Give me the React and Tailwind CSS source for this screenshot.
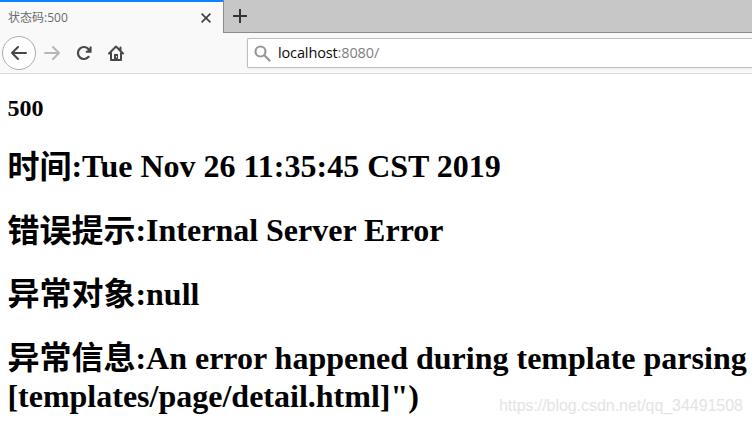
const serif = "font-['Liberation_Serif','Noto_Sans_CJK_SC',serif]";

function Label({ children }) {
  return <span className="relative top-px">{children}</span>;
}

function Tab() {
  return (
    <div className="flex h-[33px] w-[223px] shrink-0 items-center justify-between border-t-2 border-[#0a84ff] bg-[#f9f9fa] pl-2 pr-3">
      <span className="text-[12px] leading-4 text-[#6a6a6c] font-['Open_Sans','Noto_Sans_CJK_SC',sans-serif]">
        <span>状态码</span>
        <span>:500</span>
      </span>
      <svg width="10" height="10" viewBox="0 0 10 10" fill="none" stroke="#3f3f41" strokeWidth="1.6">
        <path d="M.6.6l8.8 8.8M9.4.6L.6 9.4" />
      </svg>
    </div>
  );
}

function TabStrip() {
  return (
    <div className="flex h-[33px] bg-[#f9f9fa]">
      <Tab />
      <div className="flex flex-1 border-b border-l border-[#8b8b8b] bg-[#c7c7c7] pl-[9px] pt-[9px]">
        <svg width="14" height="14" viewBox="0 0 14 14" fill="none" stroke="#333335" strokeWidth="2">
          <path d="M7 0v14M0 7h14" />
        </svg>
      </div>
    </div>
  );
}

function Toolbar() {
  return (
    <div className="flex h-[41px] items-center border-b border-[#dcdcdd] bg-[#f9f9fa] pl-[2px]">
      <div className="flex size-[34px] shrink-0 items-center justify-center rounded-full border border-[#adadae] bg-white">
        <svg width="16" height="14" viewBox="0 0 16 14" fill="none" stroke="#48484a" strokeWidth="2" strokeLinecap="round" strokeLinejoin="round">
          <path d="M7 1L1 7l6 6M1 7h14" />
        </svg>
      </div>
      <svg className="ml-2 shrink-0" width="16" height="14" viewBox="0 0 16 14" fill="none" stroke="#b7b7b8" strokeWidth="2" strokeLinecap="round" strokeLinejoin="round">
        <path d="M9 1l6 6-6 6M15 7H1" />
      </svg>
      <svg className="ml-4 shrink-0" width="16" height="16" viewBox="0 0 16 16" fill="none" stroke="#48484a" strokeWidth="2.2" strokeLinecap="round">
        <path d="M12.6 4.200A6 6 0 1 0 12.600 11.800" />
        <path d="M14.600 1.500v5.200H9.800" strokeWidth="2" strokeLinecap="butt" />
        <path d="M15 2v5H10z" fill="#48484a" stroke="none" />
      </svg>
      <svg className="ml-4 shrink-0" width="16" height="16" viewBox="0 0 16 16" fill="none" stroke="#48484a" strokeWidth="2" strokeLinecap="round" strokeLinejoin="round">
        <path d="M1 8.500l7-7 7 7M3 8v7h10V8M12.500 2.500v3" />
        <path d="M6 14.500V9h4v5.500z" fill="#48484a" stroke="none" />
        <path d="M8.500 11v1.500" stroke="#f9f9fa" strokeWidth="1" strokeLinecap="butt" />
      </svg>
      <div className="ml-[123px] flex h-[30px] flex-1 items-center rounded-l-[2px] border border-r-0 border-[#bdbdbe] bg-white pl-[6px] shadow-[0_1px_3px_rgba(0,0,0,0.06)]">
        <svg width="17" height="17" viewBox="0 0 17 17" fill="none" stroke="#979798" strokeWidth="2.200" strokeLinecap="round">
          <circle cx="6.500" cy="6.500" r="5" />
          <path d="M10.300 10.300l5.200 5.200" />
        </svg>
        <span className="ml-[7px] text-[14.500px] leading-5 text-[#808082] font-['Open_Sans',sans-serif] tracking-[-0.13px]">
          <span className="text-[#0c0c0d]">localhost</span>:8080/
        </span>
      </div>
    </div>
  );
}

export default function App() {
  return (
    <div className="relative flex h-[423px] w-[752px] flex-col overflow-hidden bg-white">
      <TabStrip />
      <Toolbar />
      <main className={"flex flex-col pl-[7.400px] pt-5 font-bold text-black " + serif}>
        <h2 className="text-[24px] leading-[28px]">500</h2>
        <div className="mt-[25px] flex flex-col gap-[25.900px] whitespace-nowrap text-[32px] leading-[38px]">
          <h1><Label>时间</Label>:Tue Nov 26 11:35:45 CST 2019</h1>
          <h1><Label>错误提示</Label>:Internal Server Error</h1>
          <h1>异常对象:null</h1>
          <h1>
            异常信息:An error happened during template parsing
            <br />
            [templates/page/detail.html]&quot;)
          </h1>
        </div>
      </main>
      <span className="absolute left-[499px] top-[396px] whitespace-nowrap text-[16px] leading-5 tracking-[-0.05px] text-[#e4e4e4] font-['Liberation_Sans',sans-serif]">
        https://blog.csdn.net/qq_34491508
      </span>
    </div>
  );
}
